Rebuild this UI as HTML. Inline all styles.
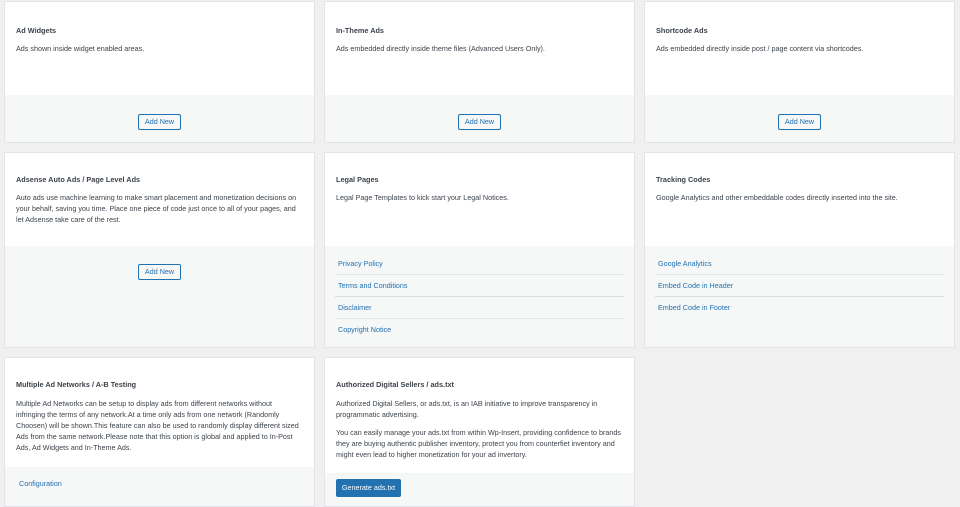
<!DOCTYPE html>
<html><head><meta charset="utf-8"><style>
*{margin:0;padding:0;box-sizing:border-box}
body{width:960px;height:499px;overflow:hidden;background:#f0f0f1;font-family:"Liberation Sans",sans-serif;font-size:7.2px;color:#3c434a;position:relative}
.c{position:absolute;background:#f6f7f7;border:1px solid #e2e4e7}
.w{position:absolute;left:0;right:0;top:0;background:#fff}
.t{position:absolute;left:11px;font-weight:bold;color:#3c434a;font-size:7.3px}
.d{position:absolute;left:11px;right:12px;line-height:10.9px}
.b{position:absolute;border:1px solid #2271b1;border-radius:2px;color:#2271b1;background:#f6f7f7;height:16px;line-height:14px;text-align:center;width:43px}
.l{position:absolute;left:10px;right:10px;color:#2271b1;height:22px;line-height:22px;padding-left:3px;border-bottom:1px solid #e2e4e7}
</style></head><body>

<div class="c" style="left:4px;top:1px;width:311px;height:142px"><div class="w" style="height:93px"></div>
<div class="t" style="top:24px">Ad Widgets</div><div class="d" style="top:42px">Ads shown inside widget enabled areas.</div>
<div class="b" style="left:133px;top:112px">Add New</div></div>

<div class="c" style="left:324px;top:1px;width:311px;height:142px"><div class="w" style="height:93px"></div>
<div class="t" style="top:24px">In-Theme Ads</div><div class="d" style="top:42px">Ads embedded directly inside theme files (Advanced Users Only).</div>
<div class="b" style="left:133px;top:112px">Add New</div></div>

<div class="c" style="left:644px;top:1px;width:311px;height:142px"><div class="w" style="height:93px"></div>
<div class="t" style="top:24px">Shortcode Ads</div><div class="d" style="top:42px">Ads embedded directly inside post / page content via shortcodes.</div>
<div class="b" style="left:133px;top:112px">Add New</div></div>

<div class="c" style="left:4px;top:152px;width:311px;height:196px"><div class="w" style="height:93px"></div>
<div class="t" style="top:22px">Adsense Auto Ads / Page Level Ads</div><div class="d" style="top:40px">Auto ads use machine learning to make smart placement and monetization decisions on your behalf, saving you time. Place one piece of code just once to all of your pages, and let Adsense take care of the rest.</div>
<div class="b" style="left:133px;top:111px">Add New</div></div>

<div class="c" style="left:324px;top:152px;width:311px;height:196px"><div class="w" style="height:93px"></div>
<div class="t" style="top:22px">Legal Pages</div><div class="d" style="top:40px">Legal Page Templates to kick start your Legal Notices.</div>
<div class="l" style="top:100px">Privacy Policy</div>
<div class="l" style="top:122px;border-bottom-color:#dcdcde">Terms and Conditions</div>
<div class="l" style="top:144px">Disclaimer</div>
<div class="l" style="top:166px;border:none">Copyright Notice</div></div>

<div class="c" style="left:644px;top:152px;width:311px;height:196px"><div class="w" style="height:93px"></div>
<div class="t" style="top:22px">Tracking Codes</div><div class="d" style="top:40px">Google Analytics and other embeddable codes directly inserted into the site.</div>
<div class="l" style="top:100px">Google Analytics</div>
<div class="l" style="top:122px;border-bottom-color:#dcdcde">Embed Code in Header</div>
<div class="l" style="top:144px;border:none">Embed Code in Footer</div></div>

<div class="c" style="left:4px;top:357px;width:311px;height:150px"><div class="w" style="height:109px"></div>
<div class="t" style="top:22px">Multiple Ad Networks / A-B Testing</div><div class="d" style="top:41px">Multiple Ad Networks can be setup to display ads from different networks without infringing the terms of any network.At a time only ads from one network (Randomly Choosen) will be shown.This feature can also be used to randomly display different sized Ads from the same network.Please note that this option is global and applied to In-Post Ads, Ad Widgets and In-Theme Ads.</div>
<div style="position:absolute;left:14px;top:121px;color:#2271b1">Configuration</div></div>

<div class="c" style="left:324px;top:357px;width:311px;height:150px"><div class="w" style="height:115px"></div>
<div class="t" style="top:22px">Authorized Digital Sellers / ads.txt</div><div class="d" style="top:41px">Authorized Digital Sellers, or ads.txt, is an IAB initiative to improve transparency in programmatic advertising.</div>
<div class="d" style="top:70px">You can easily manage your ads.txt from within Wp-Insert, providing confidence to brands they are buying authentic publisher inventory, protect you from counterfiet inventory and might even lead to higher monetization for your ad invertory.</div>
<div style="position:absolute;left:11px;top:121px;width:65px;height:18px;background:#2271b1;border-radius:2px;color:#fff;text-align:center;line-height:18px">Generate ads.txt</div></div>

</body></html>
